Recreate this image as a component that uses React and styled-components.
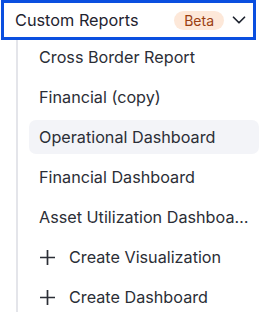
import React from "react";
import styled, { createGlobalStyle } from "styled-components";
import { ChevronDown } from "lucide-react";

const GlobalStyle = createGlobalStyle`
  body {
    margin: 0;
    background: #ffffff;
    font-family: Inter, "Noto Sans", sans-serif;
  }
`;

const Panel = styled.div`
  width: 263px;
  height: 312px;
  overflow: hidden;
`;

const Header = styled.div`
  box-sizing: border-box;
  width: 255px;
  height: 40px;
  margin-left: 1px;
  border: 3.5px solid #0a4fe0;
  display: flex;
  align-items: center;
  padding: 0 3px 0 11px;
  color: #1f2430;
  font-size: 16.3px;
`;

const Title = styled.span`
  flex: 1;
`;

const Badge = styled.span`
  display: inline-flex;
  align-items: center;
  justify-content: center;
  height: 19px;
  padding: 0 10px;
  border-radius: 10px;
  background: #fde8d9;
  color: #9a3f12;
  font-size: 14px;
  margin-right: 4px;
`;

const List = styled.div`
  margin-left: 16px;
  border-left: 2px solid #e4e5ea;
  padding-left: 11px;
  display: flex;
  flex-direction: column;
  gap: 6px;
`;

const Item = styled.div`
  box-sizing: border-box;
  height: 34px;
  width: 230px;
  display: flex;
  align-items: center;
  gap: 13px;
  padding: 0 10px;
  border-radius: 7px;
  background: ${({ $active }) => ($active ? "#f3f4f8" : "transparent")};
  color: #2b2e36;
  font-size: 16.2px;
  white-space: nowrap;
`;

const Label = styled.span`
  min-width: 0;
  overflow: hidden;
  text-overflow: ellipsis;
`;

const PlusIcon = () => (
  <svg width="17" height="17" viewBox="0 0 17 17" style={{ flexShrink: 0 }}>
    <path d="M8.5 1v15M1 8.5h15" stroke="#2b2e36" strokeWidth="1.7" />
  </svg>
);

const reports = [
  "Cross Border Report",
  "Financial (copy)",
  "Operational Dashboard",
  "Financial Dashboard",
  "Asset Utilization Dashboard",
];

export default function App() {
  return (
    <Panel>
      <GlobalStyle />
      <Header>
        <Title>Custom Reports</Title>
        <Badge>Beta</Badge>
        <ChevronDown size={22} color="#1f2430" strokeWidth={1.9} />
      </Header>
      <List>
        {reports.map((r) => (
          <Item key={r} $active={r === "Operational Dashboard"}>
            <Label>{r}</Label>
          </Item>
        ))}
        <Item>
          <PlusIcon />
          <Label>Create Visualization</Label>
        </Item>
        <Item>
          <PlusIcon />
          <Label>Create Dashboard</Label>
        </Item>
      </List>
    </Panel>
  );
}
